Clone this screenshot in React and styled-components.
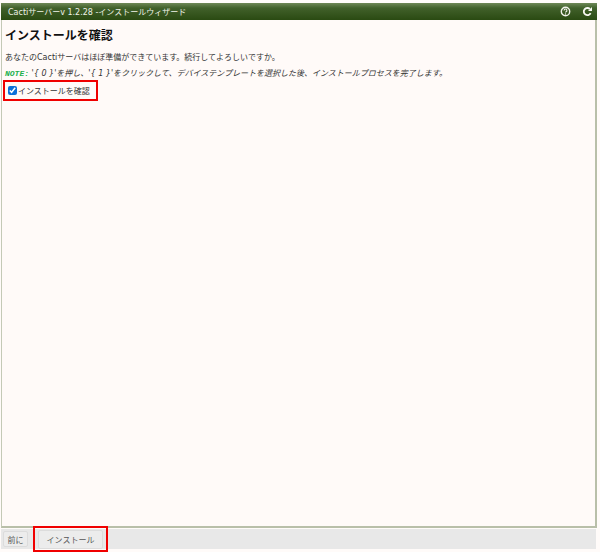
import React from 'react';
import styled, { createGlobalStyle } from 'styled-components';

const Global = createGlobalStyle`
  html, body { margin: 0; padding: 0; background: #fff; }
  body { font-family: "DejaVu Sans", "Noto Sans CJK JP", sans-serif; }
`;

const Page = styled.div`
  width: 600px;
  height: 552px;
  overflow: hidden;
  display: flex;
  flex-direction: column;
  box-sizing: border-box;
  padding: 3px 3px 0 1px;
  background: #fffbf9;
`;

const TitleBar = styled.div`
  height: 17px;
  flex: none;
  display: flex;
  align-items: center;
  justify-content: space-between;
  padding: 0 4px 0 7px;
  background: linear-gradient(#6f8856 0, #41602a 30%, #2a4a12 100%);
  color: #eef2e8;
  font-size: 8px;
`;

const TitleIcons = styled.div`
  display: flex;
  align-items: center;
  gap: 11px;
`;

const Panel = styled.div`
  height: 508px;
  flex: none;
  box-sizing: border-box;
  padding: 8px 3px 0 3px;
  background: #fffaf8;
  border-left: 1px solid #c4c9b6;
  border-right: 2px solid #b9bfa9;
  border-bottom: 2px solid #b9bfa9;
`;

const Heading = styled.h1`
  margin: 0;
  font-size: 12px;
  line-height: 17px;
  font-weight: 700;
  color: #111;
`;

const Message = styled.p`
  margin: 6px 0 0;
  font-size: 8px;
  line-height: 14px;
  color: #333;
`;

const Note = styled.p`
  margin: 2px 0 0;
  font-size: 8px;
  line-height: 13px;
  font-style: italic;
  color: #333;
  white-space: nowrap;
`;

const NoteTag = styled.span`
  color: #22b14c;
  font-weight: 700;
  font-family: "Liberation Mono", monospace;
`;

const Highlight = styled.label`
  display: flex;
  align-items: center;
  gap: 1px;
  margin: 0 0 0 -2px;
  box-sizing: border-box;
  width: 95px;
  height: 21px;
  padding: 0 0 1px 3px;
  border: 2px solid #f00000;
  font-size: 8px;
  color: #333;
  white-space: nowrap;
`;

const Check = styled.input`
  width: 9px;
  height: 9px;
  margin: 0;
  flex: none;
  accent-color: #0b6fd8;
`;

const Footer = styled.div`
  height: 20px;
  flex: none;
  width: 595px;
  margin-top: 1px;
  display: flex;
  align-items: center;
  gap: 10px;
  padding-left: 2px;
  box-sizing: border-box;
  background: #e8e8e8;
`;

const Button = styled.button`
  box-sizing: border-box;
  display: block;
  height: ${p => p.$h}px;
  padding: 0;
  width: ${p => p.$w}px;
  border: 1px solid #dcdcdc;
  border-radius: 2px;
  background: #ececec;
  color: #555;
  font-family: inherit;
  font-size: 8px;
`;

const FramedAction = styled.div`
  position: relative;
`;

const RedFrame = styled.div`
  position: absolute;
  inset: -4px -5px -3px -5px;
  border: 2px solid #f00000;
  pointer-events: none;
`;

function HelpIcon() {
  return (
    <svg width="11" height="11" viewBox="0 0 11 11" fill="none">
      <circle cx="5.5" cy="5.5" r="4.2" stroke="#f2f2ea" strokeWidth="1.4" />
      <path d="M4.1 4.4a1.4 1.4 0 1 1 2 1.3c-.4.2-.6.4-.6.9" stroke="#f2f2ea" strokeWidth="1.1" />
      <circle cx="5.5" cy="8" r=".7" fill="#f2f2ea" />
    </svg>
  );
}

function RefreshIcon() {
  return (
    <svg width="11" height="11" viewBox="0 0 11 11" fill="none">
      <path d="M8.6 7.2A3.6 3.6 0 1 1 7.9 3" stroke="#f8f8f2" strokeWidth="1.8" />
      <path d="M10 .9v4H6z" fill="#f8f8f2" />
    </svg>
  );
}

export default function App() {
  return (
    <Page>
      <Global />
      <TitleBar>
        <span>Cactiサーバーv 1.2.28 -インストールウィザード</span>
        <TitleIcons>
          <HelpIcon />
          <RefreshIcon />
        </TitleIcons>
      </TitleBar>
      <Panel>
        <Heading>インストールを確認</Heading>
        <Message>あなたのCactiサーバはほぼ準備ができています。続行してよろしいですか。</Message>
        <Note>
          <NoteTag>NOTE:</NoteTag> '{'{ 0 }'}'を押し、'{'{ 1 }'}'をクリックして、デバイステンプレートを選択した後、インストールプロセスを完了します。
        </Note>
        <Highlight>
          <Check type="checkbox" defaultChecked />
          インストールを確認
        </Highlight>
      </Panel>
      <Footer>
        <Button $w={25} $h={16}>前に</Button>
        <FramedAction>
          <Button $w={65} $h={19}>インストール</Button>
          <RedFrame />
        </FramedAction>
      </Footer>
    </Page>
  );
}
